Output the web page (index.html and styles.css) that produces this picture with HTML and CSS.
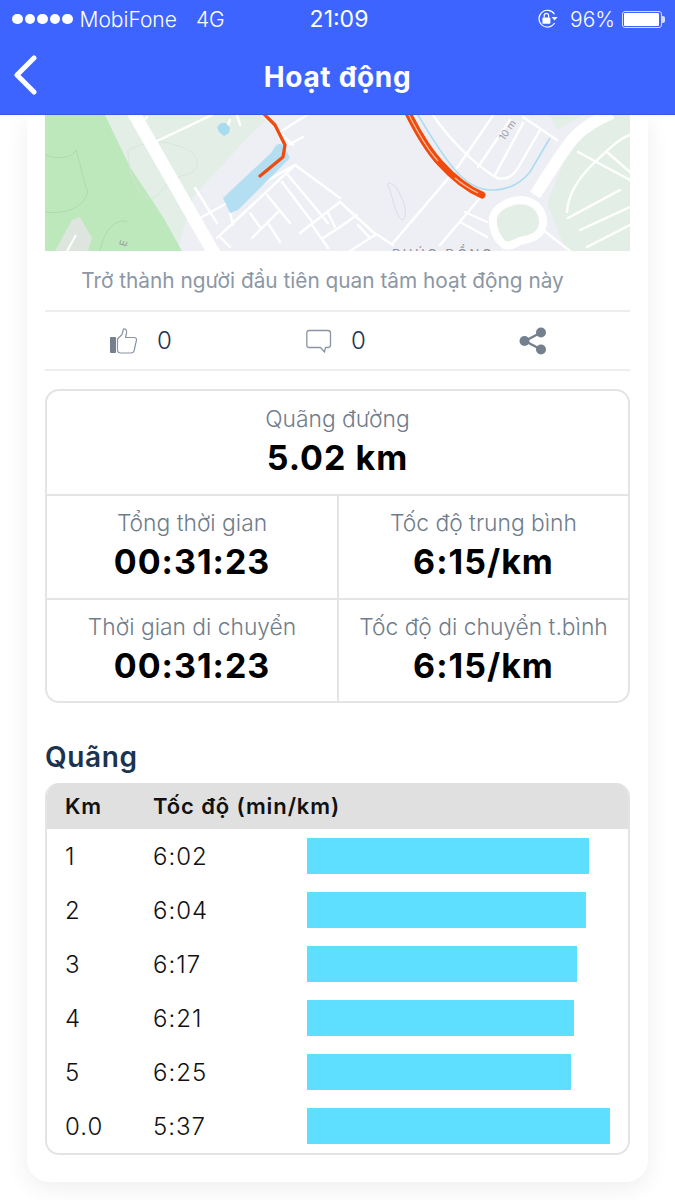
FILE: index.html
```html
<!DOCTYPE html>
<html lang="vi">
<head>
  <meta charset="UTF-8" />
  <meta name="viewport" content="width=device-width, initial-scale=1.0"/>
  <title>Hoạt động</title>
  <link rel="stylesheet" href="styles.css">
</head>
<body>
  <!-- Thanh trên -->
  <header class="top">
    <div class="status">
      <div class="status-left">
        <span class="dots"><i></i><i></i><i></i><i></i><i></i></span>
        <span>MobiFone</span>
        <span class="net">4G</span>
      </div>
      <div class="clock">21:09</div>
      <div class="status-right">
        <svg class="lock" width="22" height="20" viewBox="0 0 22 20">
          <path d="M17.5 5.2A8.4 8.4 0 1 0 17.6 14" fill="none" stroke="#fff" stroke-width="1.1"/>
          <path d="M14.6 8h6l-3 3.6z" fill="#fff"/>
          <rect x="5.4" y="8.6" width="8" height="6.2" rx="0.8" fill="#fff"/>
          <path d="M7.2 8.6V6.6a2.2 2.2 0 0 1 4.4 0v2" fill="none" stroke="#fff" stroke-width="1.2"/>
        </svg>
        <span>96%</span>
        <span class="battery"><b></b></span>
      </div>
    </div>
    <nav class="nav">
      <svg class="back" width="26" height="40" viewBox="0 0 26 40">
        <path d="M22 3 5 20l17 17" fill="none" stroke="#fff" stroke-width="5" stroke-linecap="round" stroke-linejoin="round"/>
      </svg>
      <h1>Hoạt động</h1>
    </nav>
  </header>

  <main class="card">
    <!-- Bản đồ -->
    <svg class="map" viewBox="45 115 585 136" width="585" height="136">
      <rect x="45" y="115" width="585" height="136" fill="#eeeef5"/>
      <path d="M105 115H272L250 135 193 197 177 251H45V115Z" fill="#e3efe6"/>
      <path d="M45 115H105L130 167 163 217 182 251H45Z" fill="#bce8bc"/>
      <path d="M45 155C60 160 72 158 76 150 82 170 84 185 88 192 84 205 70 215 45 212M100 251C105 225 120 218 127 222" fill="none" stroke="#a9d6ab" stroke-width="0.8"/>
      <path d="M55 251 72 220 80 217 92 238 88 251Z" fill="#dde5de"/>
      <path d="M67 251 76 235" stroke="#fff" stroke-width="2" fill="none"/>
      <path d="M128 150C128 175 140 200 152 198 165 195 160 180 185 175 205 170 200 150 175 145 160 140 150 140 128 150Z" fill="none" stroke="#d5e3d9" stroke-width="0.9"/>
      <path d="M550 115H583L557 130Z" fill="#e3efe6"/>
      <path d="M575 135 600 115H630V251H566L547 203Z" fill="#e3efe6"/>
      <path d="M390 190C385 180 390 183 395 186 405 200 408 215 403 220 398 220 394 205 390 190Z" fill="none" stroke="#dcdce6" stroke-width="1"/>

      <!-- đường nhỏ -->
      <g fill="none" stroke="#fff" stroke-width="2.4" stroke-linecap="round">
        <path d="M155 142 212 115M142 122 147 117M230 120 227 127M237 115 240 125"/>
        <path d="M195 188 217 223M202 217 295 165 340 198M217 238 295 165M230 213 233 225M220 237 230 247"/>
        <path d="M250 213 260 227M267 195 290 223M288 175 328 223M282 182 313 223M252 238 280 210M268 223 280 242"/>
        <path d="M300 233 340 202M312 225 328 248M323 238 340 227M328 213 335 227"/>
        <path d="M280 132 307 115M288 145 303 137M280 133 293 145"/>
        <path d="M340 202 373 232 393 245M340 227 357 215M358 225 370 238M350 251 375 235"/>
        <path d="M393 243 457 168 490 120 493 115M433 115C450 140 475 165 497 178 505 180 512 178 518 168L540 130"/>
        <path d="M478 167 510 120M495 175 523 123M523 117 557 140M440 245 480 198M460 222 487 237M465 212 487 222"/>
        <path d="M578 152 630 180M567 212C568 195 578 178 595 162 610 148 620 138 630 135M607 152 630 172M568 218 620 190M580 230 630 207M587 247 630 225M543 230 570 251"/>
      </g>

      <!-- hồ và sông -->
      <path d="M223 198 272 152C276 142 282 142 285 148L290 158 238 210 230 213Z" fill="#b4def1"/>
      <path d="M221 123h5l4 5-1 5-5 3-5-4-2-5z" fill="#a9dbf0"/>
      <path d="M418 115C430 135 442 155 455 170 468 185 482 191 495 190 512 189 522 182 530 172L550 138" fill="none" stroke="#aadcf0" stroke-width="1.5"/>

      <!-- đường lớn -->
      <path d="M133 112 215 255" fill="none" stroke="#fff" stroke-width="13"/>
      <path d="M535 195C550 172 560 155 572 140 582 128 596 120 612 113" fill="none" stroke="#fff" stroke-width="12"/>
      <path d="M493 218C495 207 510 200 522 200 536 201 544 212 543 224 541 237 530 239 520 241 514 244 508 248 503 244 496 237 492 228 493 218Z" fill="#e3efe6" stroke="#fff" stroke-width="8"/>

      <!-- tuyến chạy -->
      <path d="M263 113 275 125 285 145 283 157 260 176" fill="none" stroke="#f04a0c" stroke-width="3.2" stroke-linecap="round" stroke-linejoin="round"/>
      <path d="M408 113C418 133 428 150 440 163 450 174 465 188 482 195" fill="none" stroke="#f04a0c" stroke-width="7" stroke-linecap="round"/>
      <path d="M408 113C418 133 428 150 438 161M455 178C463 185 470 189 478 193" fill="none" stroke="#f9c2aa" stroke-width="1.2"/>

      <text class="map-label" x="392" y="259">PHÚC ĐỒNG</text>
      <text class="map-small" transform="translate(504 141) rotate(-55)">10 m</text>
      <text class="map-small" transform="translate(126 247) rotate(-75)">E</text>
    </svg>

    <p class="first">Trở thành người đầu tiên quan tâm hoạt động này</p>

    <div class="actions">
      <div class="action">
        <svg width="28" height="26" viewBox="0 0 28 26">
          <rect x="0" y="9" width="6" height="16" rx="1" fill="#75808e"/>
          <path d="M7.5 11 12 6.5 13.5 1C15.5 .5 17 2 16.5 5L15.5 9.5H24C26 9.5 27 11 26.3 13L24 23C23.5 24.5 22.5 25 21 25H11C9 25 7.5 24 7.5 22Z" fill="none" stroke="#8a95a3" stroke-width="1.2" stroke-linejoin="round"/>
        </svg>
        <span>0</span>
      </div>
      <div class="action">
        <svg width="26" height="26" viewBox="0 0 26 26">
          <path d="M3 2.5H22C23.5 2.5 24.5 3.5 24.5 5V17C24.5 18.5 23.5 19.5 22 19.5H19.5L18.5 24 14.5 19.5H3C1.5 19.5 .8 18.5 .8 17V5C.8 3.5 1.5 2.5 3 2.5Z" fill="none" stroke="#8a95a3" stroke-width="1.3" stroke-linejoin="round"/>
        </svg>
        <span>0</span>
      </div>
      <div class="action">
        <svg width="30" height="30" viewBox="0 0 30 30">
          <path d="M23 6.5 7 15l16 8.5" fill="none" stroke="#75808e" stroke-width="2.4"/>
          <circle cx="23" cy="6.5" r="5" fill="#75808e"/>
          <circle cx="6.5" cy="15" r="5" fill="#75808e"/>
          <circle cx="23" cy="23.5" r="5" fill="#75808e"/>
        </svg>
      </div>
    </div>

    <!-- Thống kê -->
    <section class="stats">
      <div class="stat wide">
        <div class="stat-label">Quãng đường</div>
        <div class="stat-value">5.02 km</div>
      </div>
      <div class="stat">
        <div class="stat-label">Tổng thời gian</div>
        <div class="stat-value">00:31:23</div>
      </div>
      <div class="stat">
        <div class="stat-label">Tốc độ trung bình</div>
        <div class="stat-value">6:15/km</div>
      </div>
      <div class="stat">
        <div class="stat-label">Thời gian di chuyển</div>
        <div class="stat-value">00:31:23</div>
      </div>
      <div class="stat">
        <div class="stat-label">Tốc độ di chuyển t.bình</div>
        <div class="stat-value">6:15/km</div>
      </div>
    </section>

    <h2>Quãng</h2>
    <section class="laps">
      <div class="lap-head">
        <div class="col-km">Km</div>
        <div>Tốc độ (min/km)</div>
      </div>
      <div class="lap"><div class="col-km">1</div><div class="col-pace">6:02</div><div class="bar" style="width:282px"></div></div>
      <div class="lap"><div class="col-km">2</div><div class="col-pace">6:04</div><div class="bar" style="width:279px"></div></div>
      <div class="lap"><div class="col-km">3</div><div class="col-pace">6:17</div><div class="bar" style="width:270px"></div></div>
      <div class="lap"><div class="col-km">4</div><div class="col-pace">6:21</div><div class="bar" style="width:267px"></div></div>
      <div class="lap"><div class="col-km">5</div><div class="col-pace">6:25</div><div class="bar" style="width:264px"></div></div>
      <div class="lap"><div class="col-km">0.0</div><div class="col-pace">5:37</div><div class="bar" style="width:303px"></div></div>
    </section>
  </main>
</body>
</html>
```

FILE: styles.css
```css
* {
  margin: 0;
  padding: 0;
  box-sizing: border-box;
  font-family: Inter, "Noto Sans", sans-serif;
}

body {
  width: 675px;
  height: 1200px;
  background-color: #fff;
  overflow: hidden;
}

.top {
  height: 115px;
  background-color: #3e64ff;
  border-bottom: 1px solid #3358e6;
  color: #fff;
  position: relative;
  z-index: 2;
}

.status {
  height: 38px;
  padding: 0 13px 0 12px;
  display: grid;
  grid-template-columns: 1fr auto 1fr;
  align-items: center;
  font-size: 21px;
  font-weight: 300;
}

.status-left {
  display: flex;
  align-items: center;
  gap: 7px;
}

.net {
  margin-left: 12px;
}

.dots {
  display: flex;
  gap: 2px;
}

.dots i {
  width: 10.5px;
  height: 10.5px;
  border-radius: 50%;
  background: #fff;
}

.clock {
  margin-left: 4px;
  font-weight: 400;
  font-size: 23px;
}

.status-right {
  display: flex;
  align-items: center;
  justify-content: flex-end;
  gap: 11px;
}

.battery {
  width: 40px;
  height: 17px;
  border: 1px solid #d5dcff;
  border-radius: 3px;
  padding: 1px;
  display: block;
  position: relative;
  margin-left: -4px;
}

.battery b {
  display: block;
  width: 35px;
  height: 13px;
  background: #fff;
  border-radius: 1px;
}

.battery::after {
  content: "";
  position: absolute;
  right: -4px;
  top: 4px;
  width: 3px;
  height: 7px;
  background: #d5dcff;
  border-radius: 0 2px 2px 0;
}

.nav {
  height: 77px;
  position: relative;
  display: flex;
  align-items: center;
  justify-content: center;
}

.nav h1 {
  font-size: 28px;
  font-weight: 700;
  letter-spacing: 0.7px;
}

.back {
  position: absolute;
  left: 12px;
  top: 17px;
}

.card {
  width: 621px;
  height: 1067px;
  margin: 0 0 0 27px;
  padding: 0 18px;
  background: #fff;
  border-radius: 0 0 22px 22px;
  box-shadow: 0 6px 24px rgba(0, 0, 0, 0.07);
}

.map {
  display: block;
}

.map-label {
  font-size: 13px;
  letter-spacing: 2.5px;
  fill: #8f8f99;
}

.map-small {
  font-size: 10px;
  fill: #9c9ca6;
}

.first {
  height: 59px;
  line-height: 59px;
  padding-right: 30px;
  text-align: center;
  font-size: 20.8px;
  color: #8b97a4;
}

.actions {
  height: 61px;
  display: grid;
  grid-template-columns: repeat(3, 1fr);
  border-top: 2px solid #eee;
  border-bottom: 2px solid #eee;
}

.action {
  display: flex;
  align-items: center;
  justify-content: center;
  gap: 19px;
  font-size: 24px;
  font-weight: 300;
  color: #1b3350;
}

.action:not(:last-child) {
  padding-right: 3px;
}

.stats {
  margin-top: 18px;
  height: 314px;
  display: grid;
  grid-template-columns: 292px 1fr;
  grid-template-rows: 103px 104px 103px;
  border: 2px solid #e4e4e4;
  border-radius: 14px;
}

.stat {
  display: flex;
  flex-direction: column;
  align-items: center;
  justify-content: center;
  gap: 5px;
  padding-bottom: 3px;
  border-top: 2px solid #e4e4e4;
}

.stat:nth-child(even) {
  border-right: 2px solid #e4e4e4;
}

.stat.wide {
  grid-column: span 2;
  border-top: none;
  border-right: none;
}

.stat-label {
  font-size: 22.8px;
  font-weight: 300;
  color: #6f7c8b;
}

.stat-value {
  font-size: 34px;
  font-weight: 700;
  color: #000;
  letter-spacing: 1px;
}

h2 {
  margin-top: 37px;
  height: 43px;
  font-size: 28px;
  font-weight: 600;
  letter-spacing: 0.6px;
  color: #1b3350;
}

.laps {
  height: 372px;
  border: 2px solid #e4e4e4;
  border-top: none;
  border-radius: 14px;
  overflow: hidden;
}

.lap-head {
  height: 46px;
  margin: 0 -2px;
  padding-left: 20px;
  background: #e0e0e0;
  display: flex;
  align-items: center;
  font-size: 22px;
  font-weight: 600;
  letter-spacing: 0.9px;
  color: #111;
}

.col-km {
  width: 88px;
}

.col-pace {
  width: 154px;
}

.lap {
  height: 54px;
  margin-left: -2px;
  padding-left: 20px;
  display: flex;
  align-items: center;
  font-size: 24px;
  font-weight: 300;
  letter-spacing: 1px;
  color: #111;
}

.bar {
  height: 36px;
  background: #5fdfff;
}
```
